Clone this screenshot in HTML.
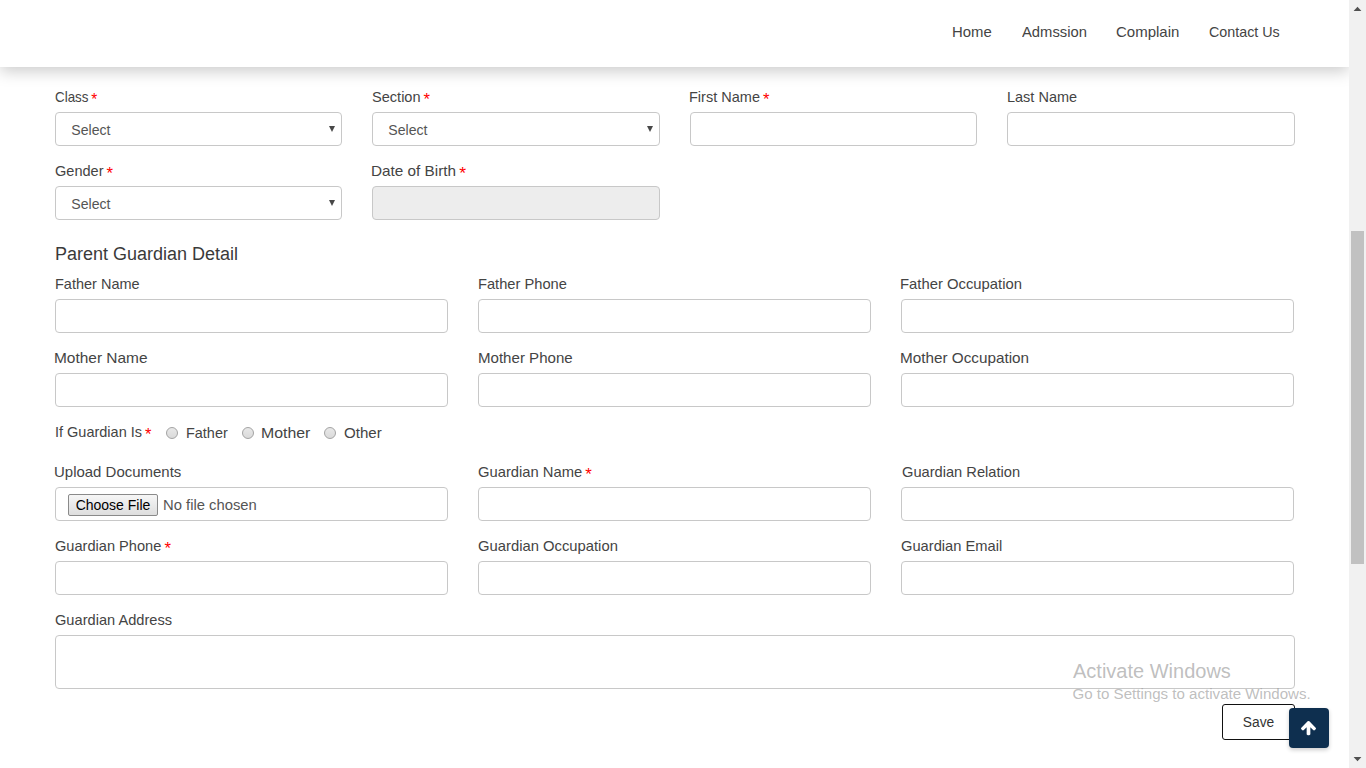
<!DOCTYPE html>
<html>
<head>
<meta charset="utf-8">
<style>
html,body{margin:0;padding:0;}
body{width:1366px;height:768px;overflow:hidden;position:relative;background:#fff;font-family:"Liberation Sans",sans-serif;color:#333;}
.nav{position:absolute;left:0;top:0;width:1349px;height:67px;background:#fff;box-shadow:0 4px 15px rgba(0,0,0,0.21);z-index:5;}
.nav span{position:absolute;top:23px;color:#444;line-height:18px;white-space:nowrap;font-size:14.4px;transform-origin:0 0;}
.lbl{position:absolute;line-height:17px;color:#444;white-space:nowrap;transform-origin:0 0;}
.req{color:#f00;font-size:16.5px;margin-left:3px;position:relative;top:3px;line-height:10px;}
.box{position:absolute;box-sizing:border-box;border:1px solid #c8c8c8;border-radius:4px;background:#fff;}
.box.dis{background:#ededed;}
.sel{font-size:14.1px;color:#555;}
.sel .t{position:absolute;left:15.3px;top:9px;line-height:17px;}
.sel .arr{position:absolute;right:6px;top:13px;width:0;height:0;border-left:3px solid transparent;border-right:3px solid transparent;border-top:6px solid #484848;}
h3{position:absolute;margin:0;font-weight:normal;font-size:18px;line-height:21px;color:#3a3a3a;white-space:nowrap;}
.radio{position:absolute;box-sizing:border-box;width:12px;height:12px;border:1px solid #a3a3a3;border-radius:50%;background:linear-gradient(#e8e8e8,#dadada);}
.sb{position:absolute;left:1349px;top:0;width:17px;height:768px;background:#f1f1f1;z-index:10;}
.thumb{position:absolute;left:2px;top:231px;width:13px;height:333px;background:#c1c1c1;}
.wm1{position:absolute;left:1073px;top:659px;font-size:20px;color:rgba(150,150,150,0.62);white-space:nowrap;line-height:24px;}
.wm2{position:absolute;left:1072.5px;top:685px;font-size:15.1px;color:rgba(150,150,150,0.62);white-space:nowrap;line-height:17px;}
.fbtn{position:absolute;left:12px;top:6px;width:90px;height:22px;box-sizing:border-box;border:1px solid #8a8a8a;border-radius:2px;background:linear-gradient(#f6f6f6,#dedede);font-size:14px;line-height:20px;text-align:center;color:#000;}
.nofile{position:absolute;left:107px;top:9px;font-size:14.8px;line-height:17px;color:#555;white-space:nowrap;}
.save{position:absolute;left:1222px;top:704px;width:73px;height:36px;box-sizing:border-box;border:1px solid #111;border-radius:3px;background:#fff;font-size:13.8px;line-height:36px;text-align:center;color:#333;}
.totop{position:absolute;left:1289px;top:708px;width:40px;height:40px;border-radius:4px;background:#0e2f4f;box-shadow:0 2px 4px rgba(0,0,0,0.2);}
</style>
</head>
<body>
<div class="nav">
  <span style="left:952px;transform:scaleX(1.0347)">Home</span>
  <span style="left:1022px;transform:scaleX(1.0278)">Admssion</span>
  <span style="left:1116.3px;transform:scaleX(1.0417)">Complain</span>
  <span style="left:1209px;transform:scaleX(0.9931)">Contact Us</span>
</div>
<div class="lbl" style="left:55.0px;top:89px;font-size:14.4px;transform:scaleX(0.9292)">Class<span class="req">*</span></div>
<div class="box sel" style="left:55px;top:112px;width:287px;height:34px"><span class="t">Select</span><span class="arr"></span></div>
<div class="lbl" style="left:372.2px;top:89px;font-size:14.4px;transform:scaleX(1.0118)">Section<span class="req">*</span></div>
<div class="box sel" style="left:372px;top:112px;width:288px;height:34px"><span class="t">Select</span><span class="arr"></span></div>
<div class="lbl" style="left:689.2px;top:89px;font-size:14.4px;transform:scaleX(1.0090)">First Name<span class="req">*</span></div>
<div class="box " style="left:690px;top:112px;width:287px;height:34px"></div>
<div class="lbl" style="left:1007.0px;top:89px;font-size:14.4px;transform:scaleX(1.0069)">Last Name</div>
<div class="box " style="left:1007px;top:112px;width:288px;height:34px"></div>
<div class="lbl" style="left:54.6px;top:163px;font-size:14.4px;transform:scaleX(1.0118)">Gender<span class="req">*</span></div>
<div class="box sel" style="left:55px;top:186px;width:287px;height:34px"><span class="t">Select</span><span class="arr"></span></div>
<div class="lbl" style="left:371.4px;top:163px;font-size:14.4px;transform:scaleX(1.0632)">Date of Birth<span class="req">*</span></div>
<div class="box dis" style="left:372px;top:186px;width:288px;height:34px"></div>
<h3 style="left:55px;top:244px">Parent Guardian Detail</h3>
<div class="lbl" style="left:55.2px;top:276px;font-size:14.4px;transform:scaleX(1.0076)">Father Name</div>
<div class="box " style="left:55px;top:299px;width:393px;height:34px"></div>
<div class="lbl" style="left:477.6px;top:276px;font-size:14.4px;transform:scaleX(1.0194)">Father Phone</div>
<div class="box " style="left:478px;top:299px;width:393px;height:34px"></div>
<div class="lbl" style="left:900.4px;top:276px;font-size:14.4px;transform:scaleX(1.0299)">Father Occupation</div>
<div class="box " style="left:901px;top:299px;width:393px;height:34px"></div>
<div class="lbl" style="left:53.8px;top:350px;font-size:14.4px;transform:scaleX(1.0729)">Mother Name</div>
<div class="box " style="left:55px;top:373px;width:393px;height:34px"></div>
<div class="lbl" style="left:477.6px;top:350px;font-size:14.4px;transform:scaleX(1.0472)">Mother Phone</div>
<div class="box " style="left:478px;top:373px;width:393px;height:34px"></div>
<div class="lbl" style="left:900.4px;top:350px;font-size:14.4px;transform:scaleX(1.0618)">Mother Occupation</div>
<div class="box " style="left:901px;top:373px;width:393px;height:34px"></div>
<div class="lbl" style="left:55px;top:424px;font-size:14.4px;transform:scaleX(1.0069)">If Guardian Is<span class="req">*</span></div>
<div class="radio" style="left:166px;top:427px"></div>
<div class="lbl" style="left:186.2px;top:425px;font-size:14.4px;transform:scaleX(1.0035)">Father</div>
<div class="radio" style="left:242px;top:427px"></div>
<div class="lbl" style="left:261.0px;top:425px;font-size:14.4px;transform:scaleX(1.1028)">Mother</div>
<div class="radio" style="left:324px;top:427px"></div>
<div class="lbl" style="left:343.8px;top:425px;font-size:14.4px;transform:scaleX(1.0493)">Other</div>
<div class="lbl" style="left:53.6px;top:464px;font-size:14.4px;transform:scaleX(1.0403)">Upload Documents</div>
<div class="box " style="left:55px;top:487px;width:393px;height:34px"><div class="fbtn">Choose File</div><span class="nofile">No file chosen</span></div>
<div class="lbl" style="left:477.6px;top:464px;font-size:14.4px;transform:scaleX(1.0264)">Guardian Name<span class="req">*</span></div>
<div class="box " style="left:478px;top:487px;width:393px;height:34px"></div>
<div class="lbl" style="left:901.7px;top:464px;font-size:14.4px;transform:scaleX(1.0181)">Guardian Relation</div>
<div class="box " style="left:901px;top:487px;width:393px;height:34px"></div>
<div class="lbl" style="left:54.6px;top:538px;font-size:14.4px;transform:scaleX(1.0146)">Guardian Phone<span class="req">*</span></div>
<div class="box " style="left:55px;top:561px;width:393px;height:34px"></div>
<div class="lbl" style="left:478.0px;top:538px;font-size:14.4px;transform:scaleX(1.0285)">Guardian Occupation</div>
<div class="box " style="left:478px;top:561px;width:393px;height:34px"></div>
<div class="lbl" style="left:901.4px;top:538px;font-size:14.4px;transform:scaleX(1.0208)">Guardian Email</div>
<div class="box " style="left:901px;top:561px;width:393px;height:34px"></div>
<div class="lbl" style="left:55.0px;top:612px;font-size:14.4px;transform:scaleX(1.0160)">Guardian Address</div>
<div class="box " style="left:55px;top:635px;width:1240px;height:54px"></div>
<div class="wm1">Activate Windows</div>
<div class="wm2">Go to Settings to activate Windows.</div>
<div class="save">Save</div>
<div class="totop"><svg width="15" height="14.2" viewBox="117 192 1558 1472" style="position:absolute;left:12px;top:13.4px"><path fill="#fff" d="M1675 971q0 51-37 90l-75 75q-38 38-91 38-54 0-90-38l-294-293v704q0 52-37.5 84.5t-90.5 32.5h-128q-53 0-90.5-32.5t-37.5-84.5v-704l-294 293q-36 38-90 38t-90-38l-75-75q-38-38-38-90 0-53 38-91l651-651q35-37 90-37 54 0 91 37l651 651q37 39 37 91z"/></svg></div>
<div class="sb"><div class="thumb"></div><svg width="17" height="768" style="position:absolute;left:0;top:0"><polygon points="4.6,10.9 12.4,10.9 8.5,6.7" fill="#505050"/><polygon points="4.6,757 12.4,757 8.5,761.2" fill="#505050"/></svg></div>
</body>
</html>
